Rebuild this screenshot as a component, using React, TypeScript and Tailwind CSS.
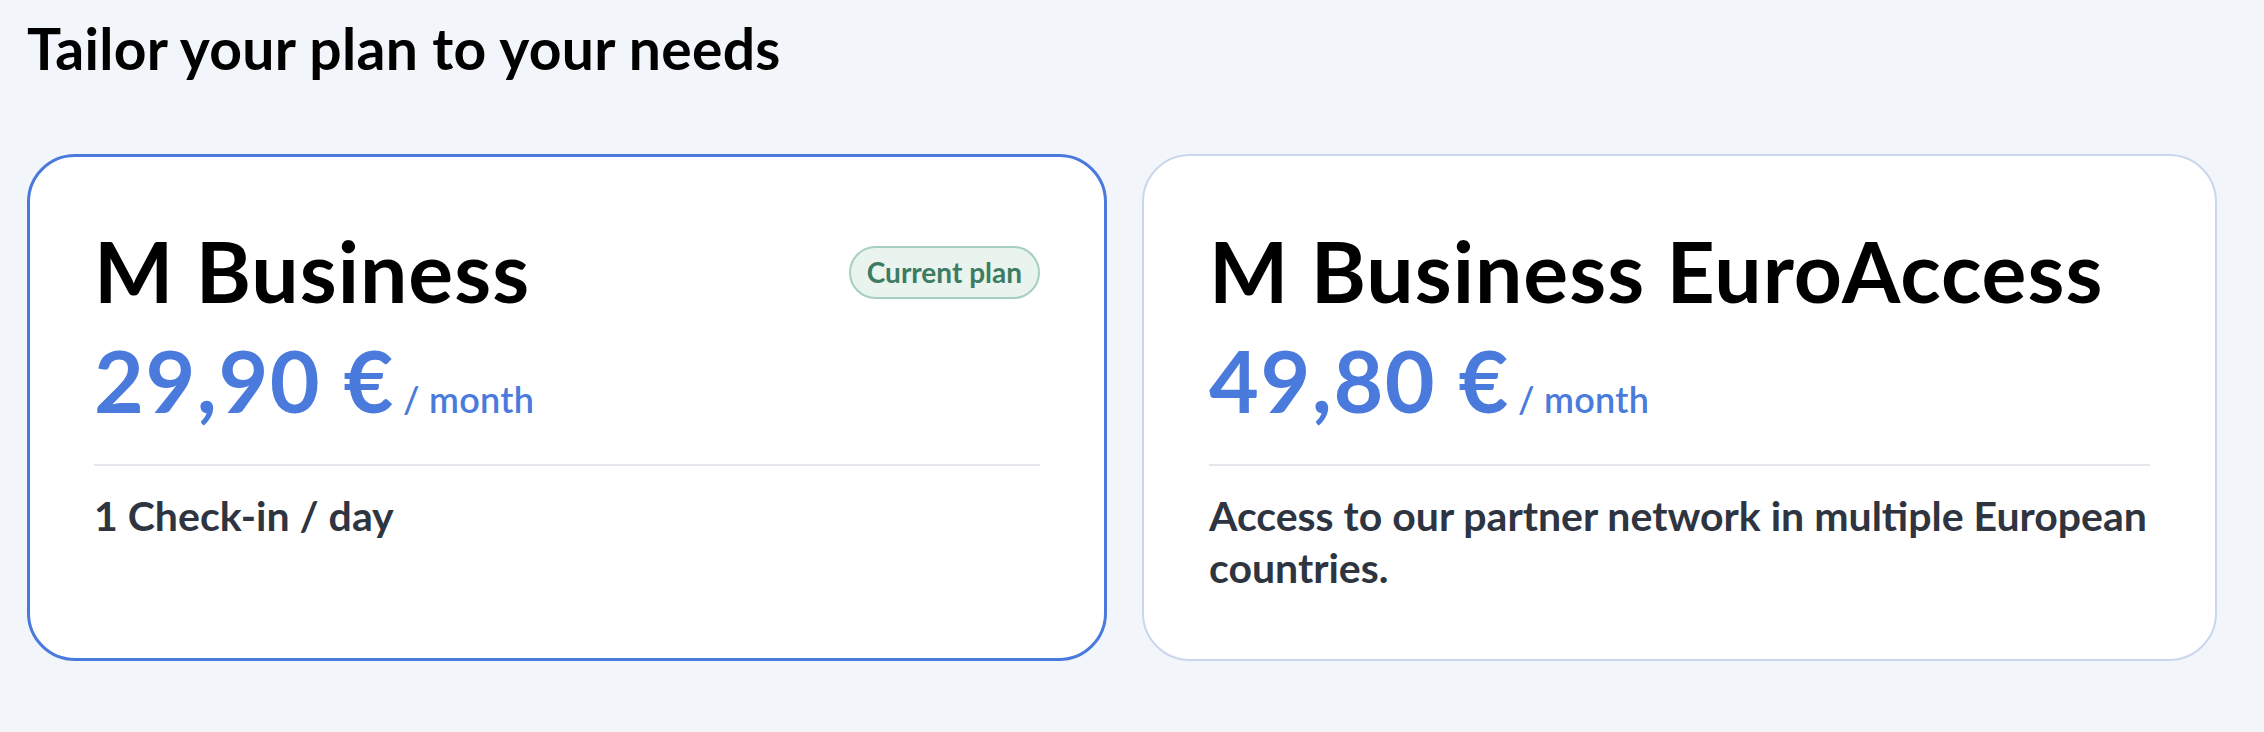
import React from "react";

function PlanCard({
  name,
  price,
  description,
  current,
}: {
  name: string;
  price: string;
  description: string;
  current?: boolean;
}) {
  return (
    <div
      className={
        current
          ? "rounded-[48px] border-[3px] border-[#4a7bdc] bg-white px-16 pt-16 pb-16"
          : "rounded-[48px] border-2 border-[#c9d6eb] bg-white px-[65px] pt-[65px] pb-[65px]"
      }
    >
      <div className="flex items-start justify-between">
        <h2 className="text-[84px] leading-[100px] font-bold text-black tracking-[1px]">{name}</h2>
        {current && (
          <span className="mt-[25px] rounded-full border-2 border-[#a6cfbd] bg-[#e9f4ef] px-4 text-[28px] leading-[49px] font-bold text-[#3d7c62]">
            Current plan
          </span>
        )}
      </div>
      <div className="mt-[9px] flex items-baseline gap-[8px] text-[#4a7bdc]">
        <span className="text-[86px] leading-[100px] font-bold tracking-[1.5px]">{price}</span>
        <span className="text-[36px] font-semibold tracking-[0.3px]">/ month</span>
      </div>
      <div className="mt-[34px] h-[2px] bg-[#e6e7ec]" />
      <p className="mt-6 text-[41px] leading-[52px] font-bold text-[#2e3440]">{description}</p>
    </div>
  );
}

export default function App() {
  return (
    <div className="min-h-[732px] w-full bg-[#f2f5fa] font-['Lato',sans-serif]">
      <div className="pl-[27px] pt-[14px]">
        <h1 className="text-[57px] leading-[68px] font-bold text-black tracking-[0.3px]">
          Tailor your plan to your needs
        </h1>
        <div className="mt-[72px] grid grid-cols-[1080px_1075px] gap-[35px]">
          <PlanCard name="M Business" price="29,90 €" description="1 Check-in / day" current />
          <PlanCard
            name="M Business EuroAccess"
            price="49,80 €"
            description="Access to our partner network in multiple European countries."
          />
        </div>
      </div>
    </div>
  );
}
